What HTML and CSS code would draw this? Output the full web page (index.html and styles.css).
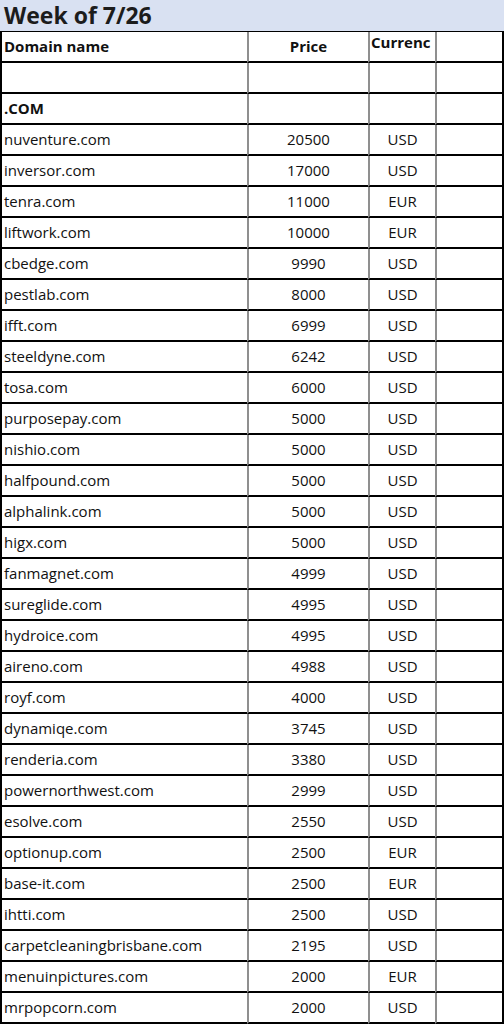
FILE: index.html
```html
<!DOCTYPE html>
<html>
<head>
<meta charset="utf-8">
<link rel="stylesheet" href="styles.css">
</head>
<body>
<div class="sheet">
  <div class="title">Week of 7/26</div>
  <div class="grid">
    <div class="c name head">Domain name</div><div class="c num head price-head">Price</div><div class="c num head cur-head">Currenc</div><div class="c"></div>
    <div class="c name"></div><div class="c"></div><div class="c"></div><div class="c"></div>
    <div class="c name head">.COM</div><div class="c"></div><div class="c"></div><div class="c"></div>
    <div class="c name">nuventure.com</div><div class="c num">20500</div><div class="c num">USD</div><div class="c"></div>
    <div class="c name">inversor.com</div><div class="c num">17000</div><div class="c num">USD</div><div class="c"></div>
    <div class="c name">tenra.com</div><div class="c num">11000</div><div class="c num">EUR</div><div class="c"></div>
    <div class="c name">liftwork.com</div><div class="c num">10000</div><div class="c num">EUR</div><div class="c"></div>
    <div class="c name">cbedge.com</div><div class="c num">9990</div><div class="c num">USD</div><div class="c"></div>
    <div class="c name">pestlab.com</div><div class="c num">8000</div><div class="c num">USD</div><div class="c"></div>
    <div class="c name">ifft.com</div><div class="c num">6999</div><div class="c num">USD</div><div class="c"></div>
    <div class="c name">steeldyne.com</div><div class="c num">6242</div><div class="c num">USD</div><div class="c"></div>
    <div class="c name">tosa.com</div><div class="c num">6000</div><div class="c num">USD</div><div class="c"></div>
    <div class="c name">purposepay.com</div><div class="c num">5000</div><div class="c num">USD</div><div class="c"></div>
    <div class="c name">nishio.com</div><div class="c num">5000</div><div class="c num">USD</div><div class="c"></div>
    <div class="c name">halfpound.com</div><div class="c num">5000</div><div class="c num">USD</div><div class="c"></div>
    <div class="c name">alphalink.com</div><div class="c num">5000</div><div class="c num">USD</div><div class="c"></div>
    <div class="c name">higx.com</div><div class="c num">5000</div><div class="c num">USD</div><div class="c"></div>
    <div class="c name">fanmagnet.com</div><div class="c num">4999</div><div class="c num">USD</div><div class="c"></div>
    <div class="c name">sureglide.com</div><div class="c num">4995</div><div class="c num">USD</div><div class="c"></div>
    <div class="c name">hydroice.com</div><div class="c num">4995</div><div class="c num">USD</div><div class="c"></div>
    <div class="c name">aireno.com</div><div class="c num">4988</div><div class="c num">USD</div><div class="c"></div>
    <div class="c name">royf.com</div><div class="c num">4000</div><div class="c num">USD</div><div class="c"></div>
    <div class="c name">dynamiqe.com</div><div class="c num">3745</div><div class="c num">USD</div><div class="c"></div>
    <div class="c name">renderia.com</div><div class="c num">3380</div><div class="c num">USD</div><div class="c"></div>
    <div class="c name">powernorthwest.com</div><div class="c num">2999</div><div class="c num">USD</div><div class="c"></div>
    <div class="c name">esolve.com</div><div class="c num">2550</div><div class="c num">USD</div><div class="c"></div>
    <div class="c name">optionup.com</div><div class="c num">2500</div><div class="c num">EUR</div><div class="c"></div>
    <div class="c name">base-it.com</div><div class="c num">2500</div><div class="c num">EUR</div><div class="c"></div>
    <div class="c name">ihtti.com</div><div class="c num">2500</div><div class="c num">USD</div><div class="c"></div>
    <div class="c name">carpetcleaningbrisbane.com</div><div class="c num">2195</div><div class="c num">USD</div><div class="c"></div>
    <div class="c name">menuinpictures.com</div><div class="c num">2000</div><div class="c num">EUR</div><div class="c"></div>
    <div class="c name">mrpopcorn.com</div><div class="c num">2000</div><div class="c num">USD</div><div class="c"></div>
  </div>
</div>
</body>
</html>
```
FILE: styles.css
```css
* { box-sizing: border-box; }
html, body { margin: 0; padding: 0; background: #fff; }
body { font-family: "Open Sans", "Noto Sans", sans-serif; color: #111; }
.sheet { width: 504px; }
.title {
  height: 31px;
  background: #d9e1f2;
  font-size: 23px;
  font-weight: 700;
  line-height: 31px;
  padding-left: 4px;
  color: #1c1c1c;
}
.grid {
  display: grid;
  grid-template-columns: 245px 121px 67px 67px;
  border-left: 2px solid #000;
  border-right: 2px solid #000;
  border-top: 1px solid #000;
}
.c {
  height: 31px;
  border-bottom: 2px solid #000;
  border-left: 2px solid #8f8f8f;
  font-size: 15px;
  line-height: 28px;
  white-space: nowrap;
  overflow: hidden;
}
.c.name { border-left: none; padding-left: 2px; }
.c.num { text-align: center; }
.head { font-weight: 700; }
.c.cur-head { line-height: 21px; text-align: left; padding-left: 1px; }
```
